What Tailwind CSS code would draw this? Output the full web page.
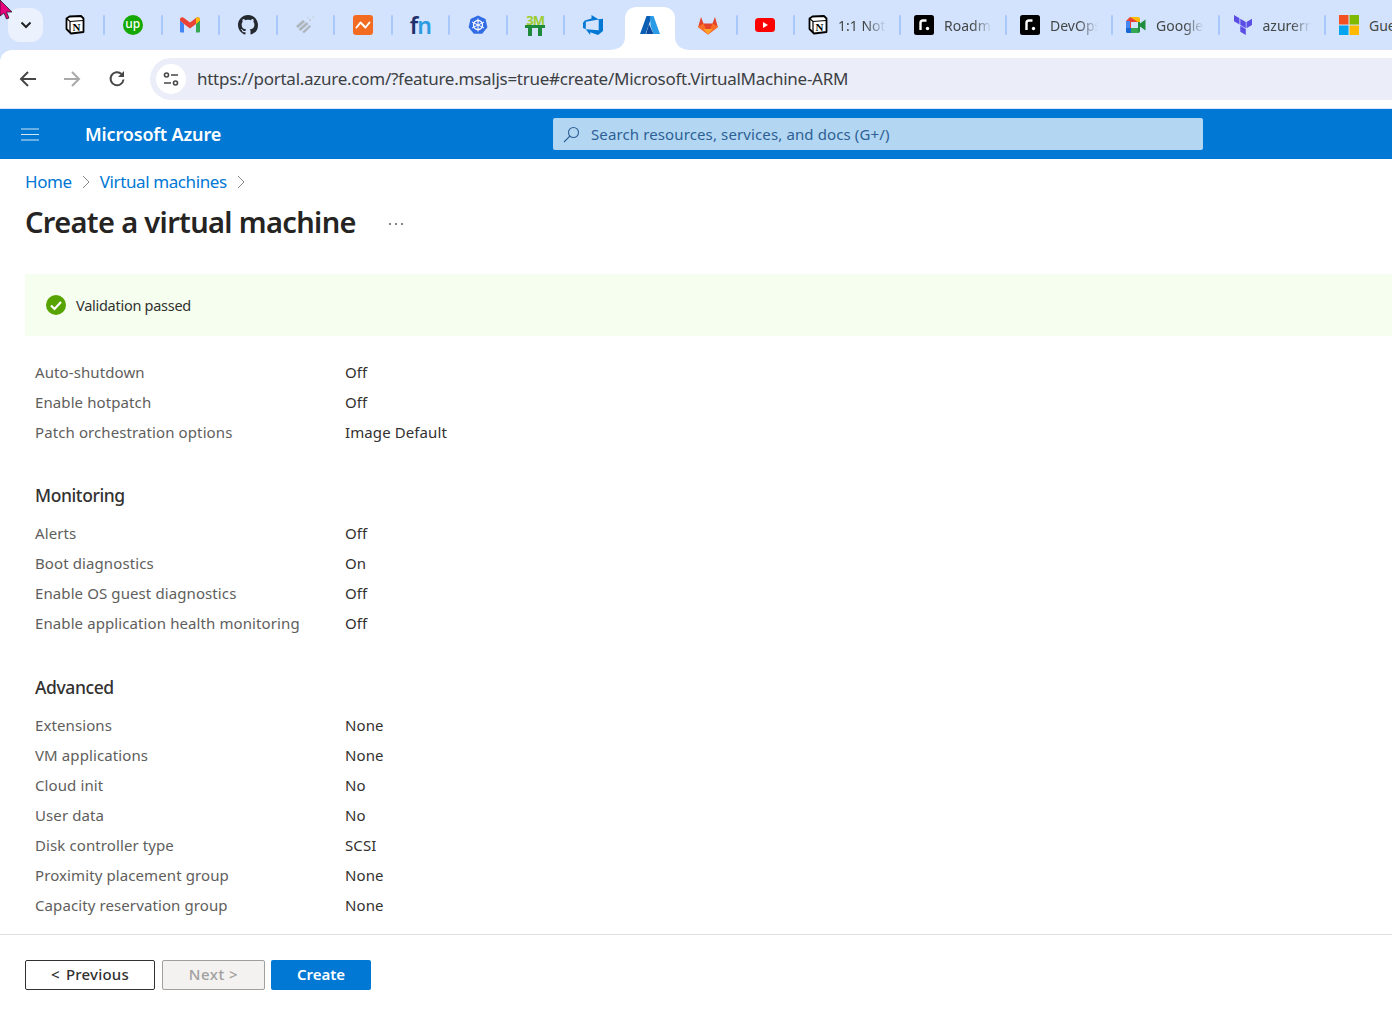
<!DOCTYPE html>
<html lang="en">
<head>
  <meta charset="UTF-8" />
  <meta name="viewport" content="width=device-width, initial-scale=1" />
  <title>Create a virtual machine</title>
  <script src="https://cdn.jsdelivr.net/npm/@tailwindcss/browser@4"></script>
</head>
<body class="bg-white h-[1020px] overflow-hidden relative font-['Noto_Sans',sans-serif] text-[#323130]">

  <!-- Mouse cursor -->
  <svg class="absolute left-0 top-0 z-20" width="13" height="20" viewBox="0 0 13 20"><path d="M0 0L12 12L6.5 12L9 18L6.5 19L4 13L0 16Z" fill="#e6007e" stroke="#111" stroke-width="0.7"/></svg>

  <!-- Tab strip -->
  <div class="h-[50px] bg-[#d3e3fd] flex items-center relative overflow-hidden whitespace-nowrap">
    <div class="absolute left-[8px] top-[8px] w-[35px] h-[34px] bg-[#ebf1fd] rounded-xl flex items-center justify-center">
      <svg width="12" height="8" viewBox="0 0 12 8"><path d="M1.500 1.500L6 6L10.500 1.500" fill="none" stroke="#222" stroke-width="2"/></svg>
    </div>

    <div class="flex items-center ml-[46.500px] h-full">
      <!-- Notion -->
      <div class="w-[57.500px] h-full flex items-center justify-center relative">
        <svg width="20" height="20" viewBox="0 0 20 20"><path d="M4.500 1.500L16 1l2.500 2.500V17L6 18.500 1.500 14V3.500z" fill="#fff" stroke="#000" stroke-width="1.800" stroke-linejoin="round"/><path d="M1.500 3.500L5 6.500 18 5.500M5 6.500V18" fill="none" stroke="#000" stroke-width="1.200"/><text x="11.500" y="15.500" text-anchor="middle" font-family="Liberation Serif" font-weight="700" font-size="11" fill="#000">N</text></svg>
        <div class="absolute right-[-1px] top-[15px] w-[2px] h-[20px] rounded bg-[#a8c7fa]"></div>
      </div>
      <!-- Upwork -->
      <div class="w-[57.500px] h-full flex items-center justify-center relative">
        <div class="w-5 h-5 rounded-full bg-[#14a800] text-white text-[12px] leading-none font-medium flex items-center justify-center pb-[2px]">up</div>
        <div class="absolute right-[-1px] top-[15px] w-[2px] h-[20px] rounded bg-[#a8c7fa]"></div>
      </div>
      <!-- Gmail -->
      <div class="w-[57.500px] h-full flex items-center justify-center relative">
        <svg width="20" height="16" viewBox="0 0 20 16"><path d="M0 3v11.500a1 1 0 001 1h3V7z" fill="#4285f4"/><path d="M16 7v8.500h3a1 1 0 001-1V3z" fill="#34a853"/><path d="M0 3.500L4 7l6 4.500L16 7l4-3.500V2.500C20 .5 17.800-.5 16.300.8L10 5.500 3.700.8C2.200-.5 0 .5 0 2.500z" fill="#ea4335"/><path d="M16 7l4-3.500V2.500C20 .5 17.800-.5 16.300.8L16 1z" fill="#fbbc04"/></svg>
        <div class="absolute right-[-1px] top-[15px] w-[2px] h-[20px] rounded bg-[#a8c7fa]"></div>
      </div>
      <!-- GitHub -->
      <div class="w-[57.500px] h-full flex items-center justify-center relative">
        <svg width="20" height="20" viewBox="0 0 16 16"><path fill="#24292f" d="M8 0C3.58 0 0 3.58 0 8c0 3.54 2.29 6.53 5.47 7.59.4.07.55-.17.55-.38 0-.19-.01-.82-.01-1.49-2.01.37-2.53-.49-2.69-.94-.09-.23-.48-.94-.82-1.13-.28-.15-.68-.52-.01-.53.63-.01 1.08.58 1.23.82.72 1.21 1.87.87 2.33.66.07-.52.28-.87.51-1.07-1.78-.2-3.64-.89-3.64-3.95 0-.87.31-1.59.82-2.15-.08-.2-.36-1.02.08-2.12 0 0 .67-.21 2.2.82.64-.18 1.32-.27 2-.27.68 0 1.36.09 2 .27 1.53-1.04 2.2-.82 2.2-.82.44 1.1.16 1.92.08 2.12.51.56.82 1.27.82 2.15 0 3.07-1.87 3.75-3.65 3.95.29.25.54.73.54 1.48 0 1.07-.01 1.93-.01 2.2 0 .21.15.46.55.38A8.013 8.013 0 0016 8c0-4.42-3.58-8-8-8z"/></svg>
        <div class="absolute right-[-1px] top-[15px] w-[2px] h-[20px] rounded bg-[#a8c7fa]"></div>
      </div>
      <!-- Grey logo -->
      <div class="w-[57.500px] h-full flex items-center justify-center relative">
        <svg width="20" height="20" viewBox="0 0 20 20"><path d="M1 11l7-6 2 2-7 6zM3.500 14l8-7 2 2-8 7zM7 17l7.500-7 1.500 1.500-6 6a1.500 1.500 0 01-2 0z" fill="#aeb6bc"/><circle cx="15" cy="5" r="1" fill="#bcc4ca"/><circle cx="18" cy="2" r="0.800" fill="#c4ccd4"/><circle cx="13" cy="2.500" r="0.700" fill="#c4ccd4"/></svg>
        <div class="absolute right-[-1px] top-[15px] w-[2px] h-[20px] rounded bg-[#a8c7fa]"></div>
      </div>
      <!-- Orange logo -->
      <div class="w-[57.500px] h-full flex items-center justify-center relative">
        <svg width="20" height="20" viewBox="0 0 20 20"><rect width="20" height="20" rx="3" fill="#f26b21"/><path d="M3.500 12.500L7.500 7.500l5 5 4-5" fill="none" stroke="#fff" stroke-width="2" stroke-linejoin="round" stroke-linecap="round"/></svg>
        <div class="absolute right-[-1px] top-[15px] w-[2px] h-[20px] rounded bg-[#a8c7fa]"></div>
      </div>
      <!-- fn -->
      <div class="w-[57.500px] h-full flex items-center justify-center relative">
        <div class="text-[23px] leading-none font-semibold tracking-[-1.200px]"><span class="text-[#1f2f6b]">f</span><span class="text-[#2b9be0]">n</span></div>
        <div class="absolute right-[-1px] top-[15px] w-[2px] h-[20px] rounded bg-[#a8c7fa]"></div>
      </div>
      <!-- Kubernetes -->
      <div class="w-[57.500px] h-full flex items-center justify-center relative">
        <svg width="20" height="20" viewBox="0 0 20 20"><path d="M10 .5l7.500 3.600 1.900 8.100-5.200 6.500H5.800L.6 12.200l1.900-8.100z" fill="#326ce5"/><circle cx="10" cy="10" r="4.500" fill="none" stroke="#fff" stroke-width="1.300"/><path d="M10 3.500v13M4 7l12 6M16 7L4 13" stroke="#fff" stroke-width="1"/></svg>
        <div class="absolute right-[-1px] top-[15px] w-[2px] h-[20px] rounded bg-[#a8c7fa]"></div>
      </div>
      <!-- 3M -->
      <div class="w-[57.500px] h-full flex items-center justify-center relative">
        <div class="w-5 pt-[1px] flex flex-col items-center">
          <div class="text-[13px] leading-[9px] h-[9px] font-bold text-[#9ccc2e] tracking-[-0.800px]">3M</div>
          <svg width="20" height="11" viewBox="0 0 20 11"><path d="M0 0h20v3h-3v8h-4V3H7v8H3V3H0z" fill="#1f8a3c"/></svg>
        </div>
        <div class="absolute right-[-1px] top-[15px] w-[2px] h-[20px] rounded bg-[#a8c7fa]"></div>
      </div>
      <!-- Azure DevOps -->
      <div class="w-[57.500px] h-full flex items-center justify-center">
        <svg width="20" height="20" viewBox="0 0 20 20"><path d="M20 3.700v12.200l-5 4.100-7.800-2.800V20L2.800 14.200l12.900 1V4.200zM15.700 4.400L8.500 0v3.600L1.800 5.500 0 7.800v5.200l2.800 1.200V6.800z" fill="#0078d4"/></svg>
      </div>
      <!-- Azure (active tab) -->
      <div class="w-[57.500px] h-full flex items-center justify-center relative">
        <svg class="absolute left-[-12.500px] bottom-0" width="82" height="43" viewBox="0 0 82 43"><path d="M0 43C9 43 16 39 16 30V12C16 5 20 0 28 0H54C62 0 66 5 66 12V30C66 39 73 43 82 43Z" fill="#fff"/></svg>
        <svg class="relative" width="20" height="18" viewBox="0 0 20 18"><path d="M6.500 0h5.500L5.500 18H0z" fill="#0a5fb4"/><path d="M10 0h3.500L20 18h-6.500l-3-8z" fill="#2a9be6"/><path d="M9 8l4.500 10H6z" fill="#0b4a9c"/></svg>
      </div>
      <!-- GitLab -->
      <div class="w-[57.500px] h-full flex items-center justify-center relative">
        <svg width="20" height="19" viewBox="0 0 20 19"><path d="M10 18.500L.7 11.500a1 1 0 01-.4-1.100L3 1l2.500 6.500h9L17 1l2.700 9.400a1 1 0 01-.4 1.100z" fill="#e24329"/><path d="M10 18.500l4.500-11L19.700 10.400a1 1 0 01-.4 1.100z" fill="#fc6d26"/><path d="M10 18.500l-4.500-11L.3 10.400a1 1 0 00.4 1.100z" fill="#fc6d26"/><path d="M10 18.500l-4.500-5.500h9z" fill="#fca326"/></svg>
        <div class="absolute right-[-1px] top-[15px] w-[2px] h-[20px] rounded bg-[#a8c7fa]"></div>
      </div>
      <!-- YouTube -->
      <div class="w-[57.500px] h-full flex items-center justify-center relative">
        <svg width="20" height="14" viewBox="0 0 20 14"><rect width="20" height="14" rx="3.500" fill="#f00"/><path d="M8 4l5 3-5 3z" fill="#fff"/></svg>
        <div class="absolute right-[-1px] top-[15px] w-[2px] h-[20px] rounded bg-[#a8c7fa]"></div>
      </div>

      <!-- Notion, with title -->
      <div class="w-[106px] h-full flex items-center pl-[14px] gap-[10px] relative">
        <svg class="shrink-0" width="20" height="20" viewBox="0 0 20 20"><path d="M4.500 1.500L16 1l2.500 2.500V17L6 18.500 1.500 14V3.500z" fill="#fff" stroke="#000" stroke-width="1.800" stroke-linejoin="round"/><path d="M1.500 3.500L5 6.500 18 5.500M5 6.500V18" fill="none" stroke="#000" stroke-width="1.200"/><text x="11.500" y="15.500" text-anchor="middle" font-family="Liberation Serif" font-weight="700" font-size="11" fill="#000">N</text></svg>
        <div class="w-[48px] text-[14px] text-[#444746] [mask-image:linear-gradient(90deg,#000_60%,transparent)]">1:1 Not</div>
        <div class="absolute right-[-1px] top-[15px] w-[2px] h-[20px] rounded bg-[#a8c7fa]"></div>
      </div>
      <!-- Roadmap -->
      <div class="w-[106px] h-full flex items-center pl-[14px] gap-[10px] relative">
        <svg class="shrink-0" width="20" height="20" viewBox="0 0 20 20"><rect width="20" height="20" rx="2.500" fill="#000"/><path d="M6.500 15V8a2.500 2.500 0 012.500-2.500h3.500" fill="none" stroke="#fff" stroke-width="2.400"/><circle cx="13.500" cy="13.500" r="1.700" fill="#fff"/></svg>
        <div class="w-[48px] text-[14px] text-[#444746] [mask-image:linear-gradient(90deg,#000_60%,transparent)]">Roadm</div>
        <div class="absolute right-[-1px] top-[15px] w-[2px] h-[20px] rounded bg-[#a8c7fa]"></div>
      </div>
      <!-- DevOps -->
      <div class="w-[106px] h-full flex items-center pl-[14px] gap-[10px] relative">
        <svg class="shrink-0" width="20" height="20" viewBox="0 0 20 20"><rect width="20" height="20" rx="2.500" fill="#000"/><path d="M6.500 15V8a2.500 2.500 0 012.500-2.500h3.500" fill="none" stroke="#fff" stroke-width="2.400"/><circle cx="13.500" cy="13.500" r="1.700" fill="#fff"/></svg>
        <div class="w-[48px] text-[14px] text-[#444746] [mask-image:linear-gradient(90deg,#000_60%,transparent)]">DevOps</div>
        <div class="absolute right-[-1px] top-[15px] w-[2px] h-[20px] rounded bg-[#a8c7fa]"></div>
      </div>
      <!-- Google Meet -->
      <div class="w-[106.500px] h-full flex items-center pl-[14px] gap-[10px] relative">
        <svg class="shrink-0" width="20" height="16" viewBox="0 0 20 16"><path d="M4 0h8v5H5v6H0V4z" fill="#ea4335"/><path d="M0 4h4v7H0z" fill="#4285f4"/><path d="M0 11h5v5H1.500A1.500 1.500 0 010 14.500z" fill="#1967d2"/><path d="M5 11h7v5H5z" fill="#34a853"/><path d="M4 0h8a2 2 0 012 2v3h-2z" fill="#fbbc04"/><path d="M12 5h2v9a2 2 0 01-2 2zM14 6.500L19.500 2.500v11L14 9.500z" fill="#1e8e3e"/></svg>
        <div class="w-[48px] text-[14px] text-[#444746] [mask-image:linear-gradient(90deg,#000_60%,transparent)]">Google</div>
        <div class="absolute right-[-1px] top-[15px] w-[2px] h-[20px] rounded bg-[#a8c7fa]"></div>
      </div>
      <!-- Terraform -->
      <div class="w-[106.500px] h-full flex items-center pl-[14px] gap-[10px] relative">
        <svg class="shrink-0" width="20" height="20" viewBox="0 0 20 20"><path d="M1 0l5.500 3.200v6.300L1 6.300zM7.300 3.700l5.500 3.200v6.300L7.300 10zM13.500 6.900L19 3.700V10l-5.500 3.200zM7.300 10.800l5.500 3.200v6l-5.500-3.200z" fill="#5c4ee5"/></svg>
        <div class="w-[48px] text-[14px] text-[#444746] [mask-image:linear-gradient(90deg,#000_60%,transparent)]">azurerm</div>
        <div class="absolute right-[-1px] top-[15px] w-[2px] h-[20px] rounded bg-[#a8c7fa]"></div>
      </div>
      <!-- Microsoft -->
      <div class="h-full flex items-center pl-[14px] gap-[10px] relative">
        <svg class="shrink-0" width="20" height="20" viewBox="0 0 20 20"><path d="M0 0h9.500v9.500H0z" fill="#f25022"/><path d="M10.500 0H20v9.500h-9.500z" fill="#7fba00"/><path d="M0 10.500h9.500V20H0z" fill="#00a4ef"/><path d="M10.500 10.500H20V20h-9.500z" fill="#ffb900"/></svg>
        <div class="text-[14px] text-[#444746]">Gue</div>
      </div>
    </div>
  </div>

  <!-- Browser toolbar -->
  <div class="h-[59px] bg-[#d3e3fd]">
    <div class="h-[58px] bg-white rounded-tl-xl flex items-center pl-[19px]">
      <svg width="18" height="18" viewBox="0 0 18 18"><path d="M17 9H2.500M9 2L2 9l7 7" fill="none" stroke="#474747" stroke-width="2"/></svg>
      <svg class="ml-[26px]" width="18" height="18" viewBox="0 0 18 18"><path d="M1 9h14.500M9 2l7 7-7 7" fill="none" stroke="#a9a9a9" stroke-width="2"/></svg>
      <svg class="ml-[27px]" width="18" height="18" viewBox="0 0 18 18"><path d="M15.500 9.500A6.500 6.500 0 1113.500 4" fill="none" stroke="#474747" stroke-width="2"/><path d="M16 1v6h-6z" fill="#474747"/></svg>
      <div class="ml-[24px] flex-1 h-[42px] bg-[#ebeef8] rounded-l-full flex items-center pl-[6px]">
        <div class="w-[30px] h-[30px] bg-white rounded-full flex items-center justify-center">
          <svg width="16" height="14" viewBox="0 0 16 14"><path d="M8 3h7M1 11h7" stroke="#474747" stroke-width="1.700"/><circle cx="3.500" cy="3" r="2" fill="none" stroke="#474747" stroke-width="1.600"/><circle cx="12.500" cy="11" r="2" fill="none" stroke="#474747" stroke-width="1.600"/></svg>
        </div>
        <div class="ml-[11px] pb-[2px] text-[17px] leading-none text-[#3c4043] whitespace-nowrap tracking-[-0.260px]">https://portal.azure.com/?feature.msaljs=true#create/Microsoft.VirtualMachine-ARM</div>
      </div>
    </div>
  </div>

  <!-- Azure header -->
  <div class="h-[50px] bg-[#0078d4] flex items-center">
    <svg class="ml-[21px]" width="18" height="13" viewBox="0 0 18 13"><path d="M0 1h18M0 6.500h18M0 12h18" stroke="#cfe6f7" stroke-width="1.200"/></svg>
    <div class="ml-[46px] w-[468px] text-[18px] font-semibold text-white tracking-[-0.150px]">Microsoft Azure</div>
    <div class="w-[650px] h-[32px] bg-[#b3d7f2] rounded-[2px] flex items-center pl-[10px]">
      <svg width="17" height="17" viewBox="0 0 17 17"><circle cx="10.500" cy="6.500" r="5" fill="none" stroke="#2d5f96" stroke-width="1.100"/><path d="M7 10L1 16" stroke="#2d5f96" stroke-width="1.100"/></svg>
      <div class="ml-[11px] text-[15px] text-[#2d5f96] tracking-[0.120px]">Search resources, services, and docs (G+/)</div>
    </div>
  </div>

  <!-- Breadcrumb -->
  <div class="h-[46px] pl-[25px] flex items-center text-[17px] text-[#0078d4] tracking-[-0.400px]">
    <span>Home</span>
    <svg class="ml-[10px] mr-[10px]" width="8" height="14" viewBox="0 0 8 14"><path d="M1 1l6 6-6 6" fill="none" stroke="#8a8886" stroke-width="1"/></svg>
    <span>Virtual machines</span>
    <svg class="ml-[10px]" width="8" height="14" viewBox="0 0 8 14"><path d="M1 1l6 6-6 6" fill="none" stroke="#8a8886" stroke-width="1"/></svg>
  </div>

  <!-- Page title -->
  <div class="h-[36px] pl-[25px] flex items-center">
    <h1 class="pb-[3px] text-[29px] leading-none font-semibold text-[#252423] tracking-[-0.650px]">Create a virtual machine</h1>
    <div class="ml-[33px] mt-[2px] flex gap-[4px]">
      <div class="w-[2px] h-[2px] rounded-full bg-[#605e5c]"></div>
      <div class="w-[2px] h-[2px] rounded-full bg-[#605e5c]"></div>
      <div class="w-[2px] h-[2px] rounded-full bg-[#605e5c]"></div>
    </div>
  </div>

  <!-- Validation banner -->
  <div class="mt-[33px] ml-[25px] h-[62px] bg-[#f6ffef] flex items-center pl-[21px]">
    <svg width="20" height="20" viewBox="0 0 20 20"><circle cx="10" cy="10" r="10" fill="#57a300"/><path d="M5 10.500l3.500 3.500L15 7" fill="none" stroke="#fff" stroke-width="2.200"/></svg>
    <div class="ml-[10px] pt-[2px] text-[14.500px] text-[#323130] tracking-[-0.270px]">Validation passed</div>
  </div>

  <!-- Review summary -->
  <div class="mt-[21px] pl-[35px] text-[15px] tracking-[0.100px]">
    <div class="h-[30px] flex items-center"><div class="w-[310px] text-[#605e5c]">Auto-shutdown</div><div>Off</div></div>
    <div class="h-[30px] flex items-center"><div class="w-[310px] text-[#605e5c]">Enable hotpatch</div><div>Off</div></div>
    <div class="h-[30px] flex items-center"><div class="w-[310px] text-[#605e5c]">Patch orchestration options</div><div>Image Default</div></div>

    <h2 class="mt-[33px] mb-[8px] h-[30px] flex items-center text-[17.500px] font-medium text-[#323130] tracking-[-0.400px]">Monitoring</h2>
    <div class="h-[30px] flex items-center"><div class="w-[310px] text-[#605e5c]">Alerts</div><div>Off</div></div>
    <div class="h-[30px] flex items-center"><div class="w-[310px] text-[#605e5c]">Boot diagnostics</div><div>On</div></div>
    <div class="h-[30px] flex items-center"><div class="w-[310px] text-[#605e5c]">Enable OS guest diagnostics</div><div>Off</div></div>
    <div class="h-[30px] flex items-center"><div class="w-[310px] text-[#605e5c]">Enable application health monitoring</div><div>Off</div></div>

    <h2 class="mt-[34px] mb-[8px] h-[30px] flex items-center text-[17.500px] font-medium text-[#323130] tracking-[-0.400px]">Advanced</h2>
    <div class="h-[30px] flex items-center"><div class="w-[310px] text-[#605e5c]">Extensions</div><div>None</div></div>
    <div class="h-[30px] flex items-center"><div class="w-[310px] text-[#605e5c]">VM applications</div><div>None</div></div>
    <div class="h-[30px] flex items-center"><div class="w-[310px] text-[#605e5c]">Cloud init</div><div>No</div></div>
    <div class="h-[30px] flex items-center"><div class="w-[310px] text-[#605e5c]">User data</div><div>No</div></div>
    <div class="h-[30px] flex items-center"><div class="w-[310px] text-[#605e5c]">Disk controller type</div><div>SCSI</div></div>
    <div class="h-[30px] flex items-center"><div class="w-[310px] text-[#605e5c]">Proximity placement group</div><div>None</div></div>
    <div class="h-[30px] flex items-center"><div class="w-[310px] text-[#605e5c]">Capacity reservation group</div><div>None</div></div>
  </div>

  <!-- Footer buttons -->
  <div class="mt-[14px] border-t border-[#e1dfdd] pt-[25px] pl-[25px] flex gap-[6px] text-[15px] font-medium">
    <button class="w-[130px] h-[30px] mr-[1px] pb-[2px] border border-[#323130] rounded-[2px] bg-white text-[#323130] tracking-[0.200px] [word-spacing:2px]">&lt; Previous</button>
    <button class="w-[103px] h-[30px] pb-[2px] border border-[#a19f9d] rounded-[2px] bg-[#f3f2f1] text-[#a19f9d] tracking-[0.500px]">Next &gt;</button>
    <button class="w-[100px] h-[30px] pb-[2px] rounded-[2px] bg-[#0078d4] text-white font-semibold">Create</button>
  </div>
</body>
</html>
